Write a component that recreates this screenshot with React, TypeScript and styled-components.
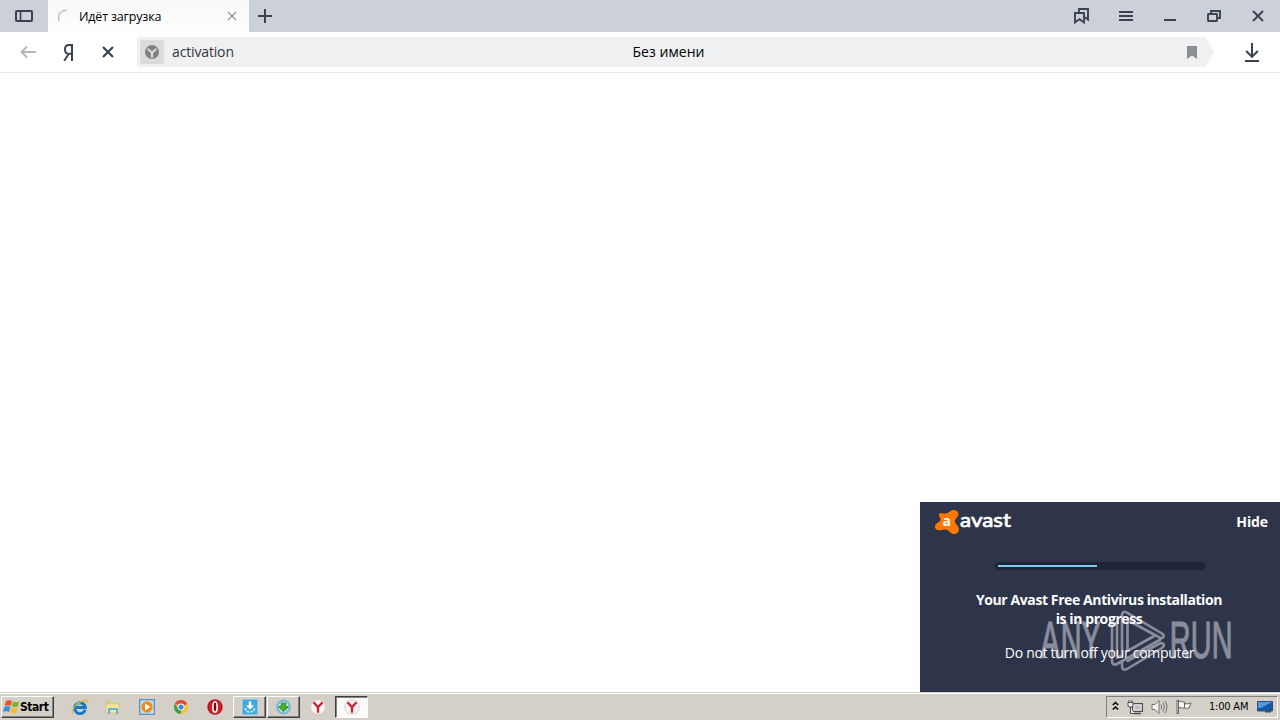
import React from "react";
import styled, { createGlobalStyle } from "styled-components";

const Global = createGlobalStyle`
  * { box-sizing: border-box; }
  body { margin: 0; background: #fff; overflow: hidden; }
  svg { display: block; flex: none; }
`;

const Screen = styled.div`
  width: 1280px;
  height: 720px;
  display: flex;
  flex-direction: column;
  background: #fff;
  font-family: "Open Sans", "Noto Sans", sans-serif;
`;

const TabStrip = styled.header`
  height: 32px;
  display: flex;
  background: #cbd0d9;
`;

const IconCell = styled.div<{ $w: number }>`
  width: ${(p) => p.$w}px;
  height: 100%;
  flex: none;
  display: flex;
  align-items: center;
  justify-content: center;
`;

const DownloadCell = styled(IconCell)`
  padding-left: 10px;
`;

const Tab = styled.div`
  width: 201px;
  height: 32px;
  display: flex;
  align-items: center;
  padding: 0 11px 0 7px;
  background: linear-gradient(#f7f7f8, #fff);
`;

const Label = styled.span<{ $size: number; $spacing?: number; $color?: string }>`
  font-size: ${(p) => p.$size}px;
  letter-spacing: ${(p) => p.$spacing ?? 0}px;
  color: ${(p) => p.$color ?? "#000"};
  white-space: nowrap;
  line-height: 20px;
`;

const TabTitle = styled(Label)`
  flex: 1;
  margin-left: 8px;
  padding-top: 1px;
`;

const WindowControls = styled.div`
  margin-left: auto;
  display: flex;
  height: 32px;
`;

const Toolbar = styled.nav`
  height: 41px;
  display: flex;
  align-items: center;
  background: #fff;
  border-bottom: 1px solid #e4e6e8;
  padding-left: 8px;
`;

const AddressBar = styled.div`
  width: 1077px;
  height: 30px;
  flex: none;
  margin-left: 9px;
  display: grid;
  grid-template-columns: 30px 1fr auto 1fr 44px;
  align-items: center;
  background: #eef0f2;
  border-radius: 3px 0 0 3px;
  clip-path: polygon(0 0, 1068px 0, 100% 50%, 1068px 100%, 0 100%);
`;

const SiteBadge = styled.div`
  width: 24px;
  height: 24px;
  margin-left: 3px;
  border-radius: 2px;
  background: #d9dbdc;
  display: flex;
  align-items: center;
  justify-content: center;
`;

const Address = styled(Label)`
  padding-left: 5px;
`;

const Page = styled.main`
  flex: 1;
  position: relative;
  background: #fff;
`;

const Popup = styled.section`
  position: absolute;
  right: 0;
  bottom: 0;
  width: 360px;
  height: 190px;
  background: #2e344a;
  color: #fff;
`;

const PopupHeader = styled.div`
  height: 40px;
  display: flex;
  align-items: center;
  justify-content: space-between;
  padding: 0 12px 0 14px;
`;

const HideButton = styled.span`
  font: 700 14px/20px "Open Sans", sans-serif;
  letter-spacing: -0.1px;
`;

const ProgressTrack = styled.div`
  width: 210px;
  height: 8px;
  margin: 20px auto 0 75px;
  padding: 3px;
  border-radius: 4px;
  background: #1f2536;
`;

const ProgressFill = styled.div`
  width: 99px;
  height: 2px;
  background: #7fcdee;
`;

const PopupTitle = styled.div`
  margin-top: 20px;
  padding-right: 2px;
  text-align: center;
  font: 700 14px/19px "Open Sans", sans-serif;
  letter-spacing: -0.4px;
`;

const PopupNote = styled.div`
  margin-top: 15px;
  padding-right: 1px;
  text-align: center;
  font: 400 14px/19px "Open Sans", sans-serif;
  letter-spacing: -0.3px;
`;

const Watermark = styled.svg`
  position: absolute;
  left: 118px;
  top: 106px;
`;

const Taskbar = styled.footer`
  height: 28px;
  display: flex;
  align-items: center;
  background: #d4d0c8;
  border-top: 1px solid #d4d0c8;
  box-shadow: inset 0 1px 0 #fff;
  padding: 0 2px 0 1px;
`;

const RaisedButton = styled.div<{ $w: number }>`
  width: ${(p) => p.$w}px;
  height: 22px;
  flex: none;
  display: flex;
  align-items: center;
  justify-content: center;
  border: 1px solid;
  border-color: #fff #404040 #404040 #fff;
  box-shadow: inset -1px -1px 0 #808080;
  background: #d4d0c8;
`;

const StartButton = styled(RaisedButton)`
  justify-content: flex-start;
  padding-left: 1px;
  font: 700 12px/20px "DejaVu Sans Condensed", "DejaVu Sans", sans-serif;
  letter-spacing: -0.45px;
  color: #000;
`;

const PressedButton = styled(RaisedButton)`
  border-color: #404040 #fff #fff #404040;
  box-shadow: inset 1px 1px 0 #808080;
  background: #fbfbfa;
`;

const QuickLaunch = styled.div`
  display: flex;
  align-items: center;
  margin-left: 9px;
  height: 100%;
`;

const TaskButtons = styled.div`
  display: flex;
  align-items: center;
  gap: 1px;
  margin-left: 1px;
`;

const Tray = styled.div`
  margin-left: auto;
  width: 172px;
  height: 22px;
  display: flex;
  align-items: center;
  border: 1px solid;
  border-color: #808080 #fff #fff #808080;
`;

const Clock = styled.span`
  width: 44px;
  margin-left: 17px;
  padding-top: 1px;
  font: 400 11px/20px "DejaVu Sans Condensed", "DejaVu Sans", sans-serif;
  letter-spacing: -0.2px;
  white-space: nowrap;
  color: #000;
`;

const TrayIcons = styled.div`
  display: flex;
  align-items: center;
  gap: 8px;
  padding-left: 5px;
`;

const INK = "#3b4350";

const Sidebar = () => (
  <svg width="18" height="12" viewBox="0 0 18 12" fill="none" stroke={INK} strokeWidth="2">
    <rect x="1" y="1" width="16" height="10" rx="1" /><path d="M5.5 1v10" strokeWidth="1.6" />
  </svg>
);
const Spinner = () => (
  <svg width="16" height="16" viewBox="0 0 16 16" fill="none" stroke="#b9bbbe" strokeWidth="1.4">
    <path d="M12 2.2C6 2 3 6 3.6 11L4.4 12.8" />
  </svg>
);
const Cross = ({ size, color, weight }: { size: number; color: string; weight: number }) => (
  <svg width={size} height={size} viewBox={`0 0 ${size} ${size}`} stroke={color} strokeWidth={weight}>
    <path d={`M1 1L${size - 1} ${size - 1}M${size - 1} 1L1 ${size - 1}`} />
  </svg>
);
const Plus = () => (
  <svg width="14" height="14" viewBox="0 0 14 14" stroke={INK} strokeWidth="2"><path d="M0 7h14M7 0v14" /></svg>
);
const Bookmarks = () => (
  <svg width="16" height="18" viewBox="0 0 16 18" fill="none" stroke={INK} strokeWidth="1.9">
    <path d="M5 5V2h9v10.5l-3-2.3" /><path d="M1 6h9v9.5L5.5 12.2 1 15.5z" />
  </svg>
);
const Menu = () => (
  <svg width="14" height="12" viewBox="0 0 14 12" fill={INK}>
    <rect width="14" height="2" y="1" /><rect width="14" height="2" y="5" /><rect width="14" height="2" y="9" />
  </svg>
);
const Minimize = () => (
  <svg width="12" height="12" viewBox="0 0 12 12" fill={INK}><rect y="9" width="12" height="2" /></svg>
);
const Restore = () => (
  <svg width="14" height="12" viewBox="0 0 14 12" fill="none" stroke={INK} strokeWidth="1.9">
    <path d="M4 4V1h9v7h-3" /><rect x="1" y="4" width="9" height="7" rx=".5" />
  </svg>
);
const Back = () => (
  <svg width="16" height="14" viewBox="0 0 16 14" fill="none" stroke="#b4b7bb" strokeWidth="1.9">
    <path d="M16 7H1.5M7 1.5L1.5 7 7 12.5" />
  </svg>
);
const YandexHome = () => (
  <svg width="10" height="17" viewBox="0 0 10 17" fill="none" stroke={INK} strokeWidth="2">
    <path d="M9 17V1H6C3.4 1 2 2.7 2 5.4S3.6 9.8 6 9.8h3M5.6 10L1.2 17" />
  </svg>
);
const SiteIcon = () => (
  <svg width="14" height="14" viewBox="0 0 14 14">
    <circle cx="7" cy="7" r="7" fill="#7f8183" />
    <path d="M2.6 3.6L7 7.8l4.4-4.2M7 7.8v5" fill="none" stroke="#dadcdd" strokeWidth="2" />
  </svg>
);
const BookmarkFlag = () => (
  <svg width="10" height="13" viewBox="0 0 10 13" fill="#8a8d91"><path d="M0 0h10v13l-5-3.4L0 13z" /></svg>
);
const Download = () => (
  <svg width="14" height="19" viewBox="0 0 14 19" fill="none" stroke={INK} strokeWidth="2">
    <path d="M7 0v13.5M1.2 8L7 13.8 12.8 8M0 18h14" />
  </svg>
);

const AvastLogo = () => (
  <svg width="80" height="28" viewBox="0 0 80 28">
    <path
      d="M7.4 5C10 6.2 13 6 15.4 3.8C17 2.4 18.2 1.9 20 2C22.8 2.2 24.8 4.2 24.3 6.8C23.8 9.2 21 10.8 20.8 13C20.6 15.6 24.8 17.5 24.9 21C25 24.2 22.4 26.4 19.4 26C16.4 25.6 15 22.4 12 21.6C9 20.9 7.1 22.4 4.6 22.3C1.8 22.1 .4 20 1 17.8C1.8 15.2 5.8 14.4 6.4 11.8C6.8 9.8 5 8.8 5 7C5 5.6 6 4.6 7.4 5z"
      fill="#ff7800"
    />
    <text x="8.4" y="18" fill="#fff" fontFamily="Open Sans, sans-serif" fontSize="14" fontWeight="700">a</text>
    <text x="26" y="19.2" fill="#fff" stroke="#fff" strokeWidth=".7" fontFamily="Lato, sans-serif" fontSize="20" fontWeight="400" textLength="51" lengthAdjust="spacingAndGlyphs">avast</text>
  </svg>
);

const AnyRun = () => (
  <Watermark width="198" height="66" viewBox="0 0 198 66" opacity=".48">
    <g fill="#eef0f5" stroke="#eef0f5" strokeWidth="1.1" fontFamily="Liberation Sans, sans-serif" fontSize="51.5" transform="scale(.56 1)">
      <text x="4.4 40.5 77.5" y="50.5">ANY</text>
      <text x="235.5 273 310.5" y="50.5">RUN</text>
    </g>
    <g fill="none" stroke="#eef0f5" strokeWidth="2.6" strokeLinejoin="round" strokeLinecap="round">
      <path d="M79 15H74V53C74 56 76 57.5 79 56L122.5 31.5" />
      <path d="M79 15V50L84 47V7C84 4 86 3 88.5 4.4L124 25.5C127.5 28 125 31 121.5 29.5L89.5 12V43L117 27.5" />
      <path d="M84 54V58C84 61.5 86 62.5 89 61L124 40C127.5 37.5 125.5 34 121.5 35.5L89.5 53" />
    </g>
  </Watermark>
);

const WindowsFlag = () => (
  <svg width="17" height="16" viewBox="0 0 17 16">
    <path d="M3 2c2-1.2 4-1 6 0L7.7 7C5.7 6 3.7 6 1.7 7z" fill="#e8572b" />
    <path d="M10 2.5c2 1 4 1 6.2 0L15 7.3c-2 1.1-4.2 1-6.2 0z" fill="#77b52f" />
    <path d="M1.4 8c2-1 4-1 6 0l-1.3 5c-2-1-4-1-6 .1z" fill="#3c8edc" />
    <path d="M8.5 8.4c2 1 4 1 6.2 0l-1.3 5c-2 1-4.2 1-6.2 0z" fill="#f6bd27" />
  </svg>
);
const Explorer = () => (
  <svg width="18" height="16" viewBox="0 0 18 16" fill="none">
    <path d="M14.2 10.8A5.4 5.4 0 1 1 14.4 8.6H5" stroke="#1678c8" strokeWidth="3" />
    <path d="M4.5 6.6Q6 3.6 9.5 3.6" stroke="#58b9ed" strokeWidth="1.5" />
    <path d="M2 14.5C-1 13 4 5.5 10.5 2.3 15 0 18 .4 16.4 4" stroke="#e3b52b" strokeWidth="1.1" />
  </svg>
);
const Folder = () => (
  <svg width="16" height="16" viewBox="0 0 16 16">
    <path d="M1 2h5l1 1h7v11H1z" fill="#e6c35e" /><path d="M3 3h10v4H3z" fill="#b9dfa4" />
    <path d="M1 5h13v9H1z" fill="#f8e49b" stroke="#dcbb62" strokeWidth=".6" />
    <path d="M3 15v-5q0-1 1-1h8q1 0 1 1v5h-2v-4H5v4z" fill="#5cb4de" />
  </svg>
);
const MediaPlayer = () => (
  <svg width="16" height="16" viewBox="0 0 16 16">
    <rect x=".7" y=".7" width="14.6" height="14.6" fill="#bfe1f6" stroke="#508bba" strokeWidth="1.2" />
    <circle cx="8" cy="8" r="5.7" fill="#f38a13" /><path d="M6 4.5L11.5 8 6 11.5z" fill="#fff" />
  </svg>
);
const Chrome = () => (
  <svg width="14" height="14" viewBox="0 0 14 14">
    <circle cx="7" cy="7" r="7" fill="#f5c52c" />
    <path d="M7 7L.9 3.5A7 7 0 0 1 13.1 3.7z" fill="#df4937" />
    <path d="M.9 3.5L4.2 8.7 7.6 10 6.5 14A7 7 0 0 1 .9 3.5z" fill="#35a156" />
    <circle cx="7" cy="7" r="3.4" fill="#fff" /><circle cx="7" cy="7" r="2.6" fill="#4a83dd" />
  </svg>
);
const Opera = () => (
  <svg width="16" height="16" viewBox="0 0 16 16">
    <circle cx="8" cy="8" r="7.7" fill="#b5161b" /><ellipse cx="8" cy="8" rx="6" ry="7" fill="#cf2025" />
    <ellipse cx="8" cy="8" rx="2.1" ry="5.2" fill="#7c080c" stroke="#fff" strokeWidth="1.6" />
  </svg>
);
const BlueDownload = () => (
  <svg width="16" height="16" viewBox="0 0 16 16">
    <rect x=".5" y=".5" width="15" height="15" rx="1" fill="#45a7da" stroke="#7cc8e9" />
    <path d="M6.7 2.5h2.6v4H12L8 10.5 4 6.5h2.7z" fill="#fff" />
    <path d="M3.5 9q0 4 4.5 4t4.5-4" fill="none" stroke="#d5effa" strokeWidth="1.7" strokeDasharray="2.5 1" />
  </svg>
);
const GreenDownload = () => (
  <svg width="17" height="16" viewBox="0 0 17 16">
    <circle cx="8.5" cy="8" r="6.3" fill="#cfe6ec" stroke="#75b9d7" strokeWidth="2.3" />
    <path d="M6.3 4.2h4.4v3.5h2.8l-5 5-5-5h2.8z" fill="#42b72a" stroke="#277d1b" strokeWidth=".9" />
  </svg>
);
const YBrowser = () => (
  <svg width="16" height="16" viewBox="0 0 16 16">
    <circle cx="8" cy="8" r="7.3" fill="#f8f6f4" stroke="#d6c5bf" strokeWidth=".8" />
    <path d="M3.5 3.3L8 8.3l4.5-5M8 8v5.8" fill="none" stroke="#d3202b" strokeWidth="2.3" />
  </svg>
);

const Chevrons = () => (
  <svg width="7" height="12" viewBox="0 0 7 12" fill="none" stroke="#000" strokeWidth="1.6">
    <path d="M.8 4l2.7-2.5L6.2 4M.8 8.5L3.5 6l2.7 2.5" />
  </svg>
);
const Network = () => (
  <svg width="16" height="16" viewBox="0 0 16 16" fill="none" stroke="#4d4d4d">
    <rect x="5.5" y="4.5" width="10" height="8" fill="#aaa" /><rect x="7" y="6" width="7" height="5" fill="#bcbcbc" stroke="#eee" />
    <path d="M7 14.5h7" strokeWidth="1.5" /><path d="M1 3.5h5V7L5 8H2L1 7zM2 1v2M5 1v2M3.5 8v6.5H7" fill="#f3f3f3" />
  </svg>
);
const Speaker = () => (
  <svg width="17" height="16" viewBox="0 0 17 16" fill="none" stroke="#737373">
    <path d="M1 5.5h3L8 1.5v13l-4-4H1z" fill="#f2f2f2" /><path d="M10 5.5q1.6 2.5 0 5M12 3.5q3 4.5 0 9M14 1.8q4 6.2 0 12.4" />
  </svg>
);
const Flag = () => (
  <svg width="16" height="16" viewBox="0 0 16 16" fill="#f5f5f5" stroke="#646464">
    <path d="M2.5 2.5C5 1.5 6 3.5 8.5 3v6C6 9.5 5 8 2.5 9z" /><path d="M8.5 4.5c2 1 4 0 6.5-.5l-2 5c-2 1-3 0-4.5 0z" />
    <rect x="1" y="1.5" width="1.5" height="13" />
  </svg>
);
const Desktop = () => (
  <svg width="16" height="14" viewBox="0 0 16 14">
    <path d="M.5 1.5h15v9.5H.5z" fill="#1958a6" stroke="#2d4e83" /><path d="M1 2h14L4 8H1z" fill="#4e9cdc" />
    <path d="M8 11h6v1.5H8z" fill="#365477" />
  </svg>
);

export default function App() {
  return (
    <Screen>
      <Global />
      <TabStrip>
        <IconCell $w={48}><Sidebar /></IconCell>
        <Tab>
          <IconCell $w={16}><Spinner /></IconCell>
          <TabTitle $size={12.5} $spacing={-0.18}>Идёт загрузка</TabTitle>
          <IconCell $w={12}><Cross size={10} color="#8f9296" weight={1.2} /></IconCell>
        </Tab>
        <IconCell $w={32}><Plus /></IconCell>
        <WindowControls>
          <IconCell $w={44}><Bookmarks /></IconCell>
          <IconCell $w={44}><Menu /></IconCell>
          <IconCell $w={44}><Minimize /></IconCell>
          <IconCell $w={44}><Restore /></IconCell>
          <IconCell $w={44}><Cross size={12} color={INK} weight={2} /></IconCell>
        </WindowControls>
      </TabStrip>
      <Toolbar>
        <IconCell $w={40}><Back /></IconCell>
        <IconCell $w={40}><YandexHome /></IconCell>
        <IconCell $w={40}><Cross size={12} color={INK} weight={2.2} /></IconCell>
        <AddressBar>
          <SiteBadge><SiteIcon /></SiteBadge>
          <Address $size={14} $spacing={-0.15} $color="#35383c">activation</Address>
          <Label $size={14} $spacing={0.05}>Без имени</Label>
          <span />
          <IconCell $w={44}><BookmarkFlag /></IconCell>
        </AddressBar>
        <DownloadCell $w={66}><Download /></DownloadCell>
      </Toolbar>
      <Page>
        <Popup>
          <PopupHeader>
            <AvastLogo />
            <HideButton>Hide</HideButton>
          </PopupHeader>
          <ProgressTrack><ProgressFill /></ProgressTrack>
          <PopupTitle>Your Avast Free Antivirus installation<br />is in progress</PopupTitle>
          <PopupNote>Do not turn off your computer</PopupNote>
          <AnyRun />
        </Popup>
      </Page>
      <Taskbar>
        <StartButton $w={53}><WindowsFlag />Start</StartButton>
        <QuickLaunch>
          <IconCell $w={33}><Explorer /></IconCell>
          <IconCell $w={34}><Folder /></IconCell>
          <IconCell $w={34}><MediaPlayer /></IconCell>
          <IconCell $w={34}><Chrome /></IconCell>
          <IconCell $w={34}><Opera /></IconCell>
        </QuickLaunch>
        <TaskButtons>
          <RaisedButton $w={33}><BlueDownload /></RaisedButton>
          <RaisedButton $w={33}><GreenDownload /></RaisedButton>
          <IconCell $w={33}><YBrowser /></IconCell>
          <PressedButton $w={33}><YBrowser /></PressedButton>
        </TaskButtons>
        <Tray>
          <TrayIcons><Chevrons /><Network /><Speaker /><Flag /></TrayIcons>
          <Clock>1:00 AM</Clock>
          <IconCell $w={34}><Desktop /></IconCell>
        </Tray>
      </Taskbar>
    </Screen>
  );
}
